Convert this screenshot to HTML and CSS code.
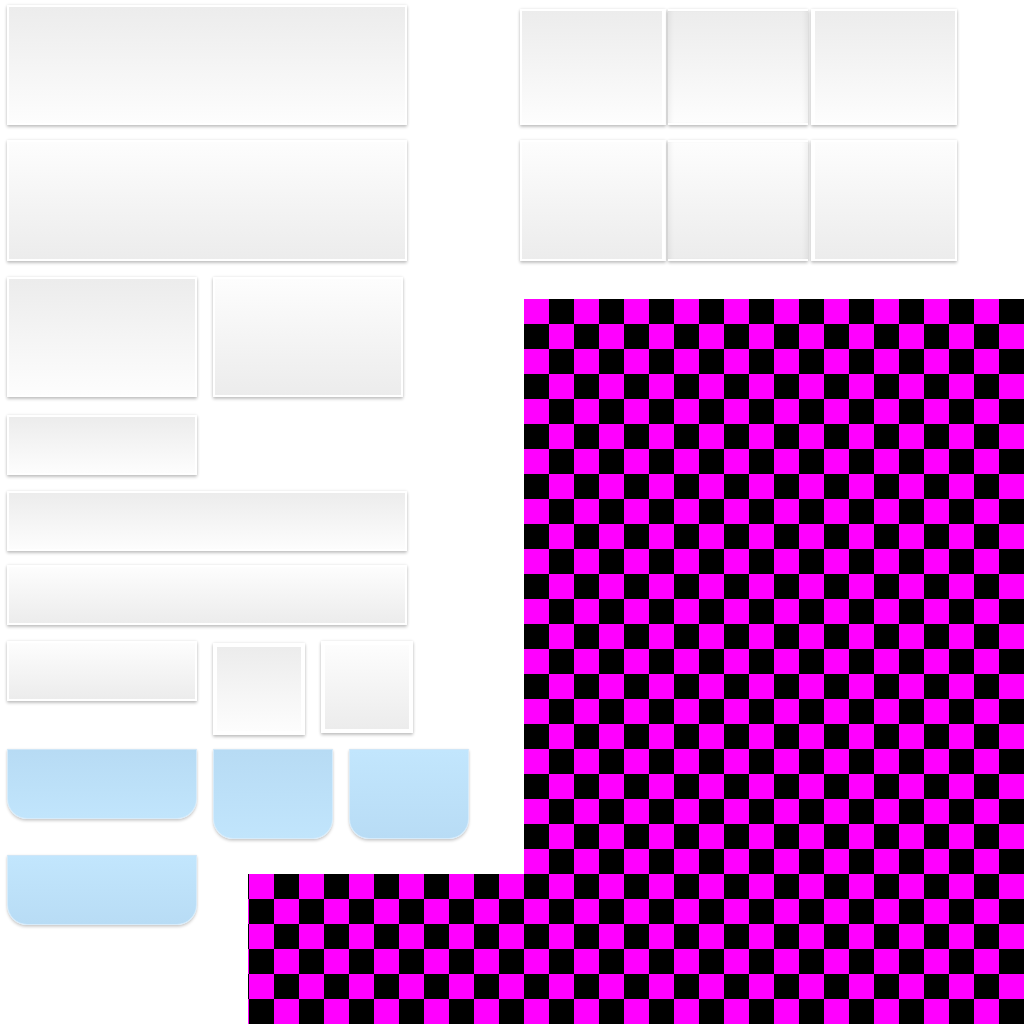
FILE: index.html
```html
<!DOCTYPE html>
<html>
<head>
    <title>Skin Atlas</title>
    <link rel="stylesheet" href="styles.css">
</head>
<body>

    <!-- Texture atlas: every piece sits at its own spot on the sheet -->
    <div class="atlas">

        <!-- wide panels -->
        <div class="piece down" id="panel-top"></div>
        <div class="piece up" id="panel-bottom"></div>

        <!-- 3-slice header / footer -->
        <div class="piece down slice-left" id="head-left"></div>
        <div class="piece down slice-mid" id="head-mid"></div>
        <div class="piece down slice-right" id="head-right"></div>
        <div class="piece up slice-left" id="foot-left"></div>
        <div class="piece up slice-mid" id="foot-mid"></div>
        <div class="piece up slice-right" id="foot-right"></div>

        <!-- medium panels -->
        <div class="piece down" id="box-a"></div>
        <div class="piece up" id="box-b"></div>
        <div class="piece down" id="box-c"></div>

        <!-- bars -->
        <div class="piece down" id="bar-a"></div>
        <div class="piece up" id="bar-b"></div>
        <div class="piece up" id="bar-c"></div>

        <!-- square buttons -->
        <div class="piece down thick" id="btn-pressed"></div>
        <div class="piece up thick" id="btn-normal"></div>

        <!-- blue tabs -->
        <div class="tab dark" id="tab-a"></div>
        <div class="tab dark" id="tab-b"></div>
        <div class="tab light" id="tab-c"></div>
        <div class="tab light" id="tab-d"></div>

        <!-- missing texture fill -->
        <div class="checker" id="checker-main"></div>
        <div class="checker" id="checker-foot"></div>
    </div>

</body>
</html>
```

FILE: styles.css
```css
body {
    margin: 0;
    background: #ffffff;
    font-family: 'Liberation Sans', Arial, sans-serif;
}

.atlas {
    position: relative;
    width: 1024px;
    height: 1024px;
    overflow: hidden;
    background: #ffffff;
}

.piece, .tab, .checker {
    position: absolute;
    box-sizing: border-box;
}

/* gray panels */
.piece {
    border: 2px solid #ffffff;
    box-shadow: 0 2px 3px rgba(0, 0, 0, 0.22), 0 0 3px rgba(0, 0, 0, 0.1);
}

.piece.down {
    background: linear-gradient(to bottom, #ececec, #fdfdfd);
}

.piece.up {
    background: linear-gradient(to bottom, #fdfdfd, #ececec);
}

.piece.thick {
    border-width: 4px;
}

.slice-left {
    border-right-width: 4px;
}

.slice-right {
    border-left-width: 4px;
}

.slice-mid {
    border-left: none;
    border-right: none;
}

.slice-mid::after {
    content: "";
    position: absolute;
    inset: 0;
    box-shadow: inset 5px 0 5px -3px rgba(0, 0, 0, 0.06), inset -5px 0 5px -3px rgba(0, 0, 0, 0.06);
}

#panel-top { left: 7px; top: 5px; width: 400px; height: 120px; }
#panel-bottom { left: 7px; top: 140px; width: 400px; height: 121px; }

#head-left { left: 520px; top: 9px; width: 146px; height: 116px; }
#head-mid { left: 668px; top: 9px; width: 140px; height: 116px; }
#head-right { left: 811px; top: 9px; width: 146px; height: 116px; }
#foot-left { left: 520px; top: 140px; width: 146px; height: 121px; }
#foot-mid { left: 668px; top: 140px; width: 140px; height: 121px; }
#foot-right { left: 811px; top: 140px; width: 146px; height: 121px; }

#box-a { left: 7px; top: 277px; width: 190px; height: 120px; }
#box-b { left: 213px; top: 277px; width: 190px; height: 120px; }
#box-c { left: 7px; top: 415px; width: 190px; height: 60px; }

#bar-a { left: 7px; top: 491px; width: 400px; height: 60px; }
#bar-b { left: 7px; top: 565px; width: 400px; height: 60px; }
#bar-c { left: 7px; top: 641px; width: 190px; height: 60px; }

#btn-pressed { left: 213px; top: 643px; width: 92px; height: 92px; }
#btn-normal { left: 321px; top: 641px; width: 92px; height: 92px; }

/* blue tabs */
.tab {
    border: 1px solid #d6ebfa;
    border-top-color: #cfe6f7;
    border-radius: 0 0 20px 20px;
    box-shadow: 0 2px 3px rgba(0, 0, 0, 0.18), 0 0 2px rgba(0, 0, 0, 0.08);
}

.tab.dark {
    background: linear-gradient(to bottom, #b7dbf4, #c1e5fc);
}

.tab.light {
    background: linear-gradient(to bottom, #c2e6fd, #b8dcf5);
}

#tab-a { left: 7px; top: 749px; width: 190px; height: 70px; }
#tab-b { left: 213px; top: 749px; width: 120px; height: 90px; }
#tab-c { left: 349px; top: 749px; width: 120px; height: 90px; }
#tab-d { left: 7px; top: 855px; width: 190px; height: 70px; }

/* magenta / black checkerboard, 25px squares */
.checker {
    background: conic-gradient(#000000 0 25%, #ff00ff 0 50%, #000000 0 75%, #ff00ff 0);
    background-size: 50px 50px;
}

#checker-main {
    left: 524px;
    top: 299px;
    width: 500px;
    height: 575px;
    background-position: 0 0;
}

#checker-foot {
    left: 248px;
    top: 874px;
    width: 776px;
    height: 150px;
    background-position: 26px 25px;
}
```
